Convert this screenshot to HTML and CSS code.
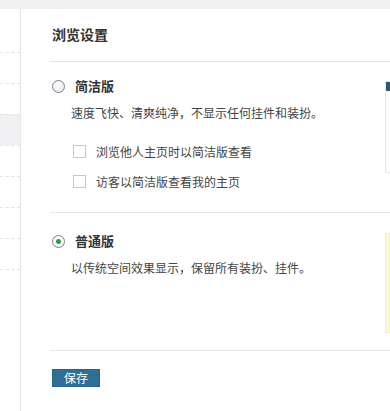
FILE: index.html
```html
<!DOCTYPE html>
<html lang="zh-CN">
<head>
    <meta charset="UTF-8">
    <meta name="viewport" content="width=device-width, initial-scale=1.0">
    <title>浏览设置</title>
    <link rel="stylesheet" href="styles.css">
</head>
<body>
    <div class="topbar"></div>
    <div class="layout">
        <div class="sidebar">
            <div class="nav-item"></div>
            <div class="nav-item"></div>
            <div class="nav-item active"></div>
            <div class="nav-item"></div>
            <div class="nav-item"></div>
            <div class="nav-item"></div>
            <div class="nav-item"></div>
            <div class="nav-item"></div>
        </div>
        <div class="main">
            <h2 class="title">浏览设置</h2>

            <div class="option">
                <div class="option-body">
                    <div class="option-head">
                        <span class="radio"></span>
                        <span class="option-name">简洁版</span>
                    </div>
                    <p class="desc">速度飞快、清爽纯净，不显示任何挂件和装扮。</p>
                    <label class="check"><span class="box"></span>浏览他人主页时以简洁版查看</label>
                    <label class="check"><span class="box"></span>访客以简洁版查看我的主页</label>
                </div>
                <div class="preview preview-simple"><div class="preview-bar"></div></div>
            </div>

            <div class="option option-normal">
                <div class="option-body">
                    <div class="option-head">
                        <span class="radio checked"></span>
                        <span class="option-name">普通版</span>
                    </div>
                    <p class="desc">以传统空间效果显示，保留所有装扮、挂件。</p>
                </div>
                <div class="preview preview-normal"></div>
            </div>

            <div class="actions">
                <button class="btn-save">保存</button>
            </div>
        </div>
    </div>
</body>
</html>
```

FILE: styles.css
```css
body {
    margin: 0;
    font-family: "Noto Sans CJK SC", "Liberation Sans", sans-serif;
    font-size: 12px;
    color: #444;
    background-color: #fff;
    overflow: hidden;
}
.topbar {
    height: 9px;
    background-color: #eff0f2;
}
.layout {
    display: flex;
    height: 402px;
}
.sidebar {
    width: 20px;
    flex-shrink: 0;
    border-right: 1px solid #e6e6e6;
    padding-top: 43px;
}
.nav-item {
    height: 30px;
    border-top: 1px dashed #e2e2e2;
}
.nav-item.active {
    background-color: #f0f0f2;
}
.main {
    flex: 1;
    min-width: 0;
    padding-left: 29px;
    overflow: hidden;
}
.title {
    margin: 0;
    padding: 15px 2px 17px;
    font-size: 14px;
    line-height: 20px;
    font-weight: bold;
    color: #333;
    border-bottom: 1px solid #e4e4e4;
}
.option {
    display: flex;
    border-bottom: 1px solid #e4e4e4;
    padding: 13px 0 21px 2px;
}
.option-normal {
    padding-top: 17px;
    padding-bottom: 17px;
}
.option-body {
    width: 333px;
    flex-shrink: 0;
}
.option-head {
    display: flex;
    align-items: center;
    height: 20px;
}
.radio {
    width: 11px;
    height: 11px;
    border: 1px solid #7b8088;
    border-radius: 50%;
    background: radial-gradient(circle at 40% 35%, #fff 0%, #e4e7ec 80%);
    margin-top: 3px;
}
.radio.checked {
    background: radial-gradient(circle, #2f9a3c 0 2px, #fff 3px, #eef0f2 100%);
    margin-top: 2px;
}
.option-name {
    margin-left: 10px;
    font-size: 13px;
    font-weight: bold;
    color: #333;
}
.desc {
    margin: 8px 0 0 19px;
    line-height: 20px;
    color: #444;
}
.check {
    display: flex;
    align-items: center;
    height: 20px;
    margin: 18px 0 0 21px;
    color: #444;
}
.check + .check {
    margin-top: 10px;
}
.check .box {
    width: 11px;
    height: 11px;
    border: 1px solid #c8c8c8;
    background-color: #fff;
    margin-right: 10px;
}
.preview {
    width: 100px;
    flex-shrink: 0;
    border: 1px solid #e6e6e6;
}
.preview-simple {
    margin-top: 6px;
    height: 90px;
}
.preview-bar {
    height: 9px;
    background-color: #2c5877;
}
.preview-normal {
    margin-top: 3px;
    height: 98px;
    background-color: #f8f9d2;
    border-color: #eef0c8;
}
.actions {
    padding: 18px 2px 0;
}
.btn-save {
    display: block;
    width: 48px;
    height: 18px;
    padding: 0;
    border: 1px solid #2a6283;
    background-color: #2f6f96;
    color: #fff;
    font-family: "Noto Sans CJK SC", sans-serif;
    font-size: 12px;
    line-height: 16px;
}
```
